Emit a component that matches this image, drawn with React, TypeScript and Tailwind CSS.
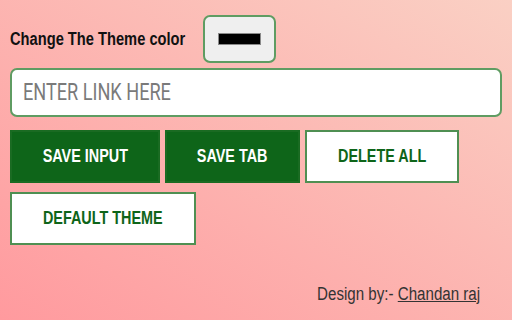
import { useState } from "react";

export default function App() {
  const [link, setLink] = useState("");

  return (
    <div className="flex h-[320px] w-[512px] flex-col bg-[linear-gradient(to_top_right,#ff9a9e,#fad0c4)] px-[10px] pt-[15px] [font-family:'Liberation_Sans',Arial,sans-serif]">
      <div className="flex items-center">
        <span className="w-[193px] whitespace-nowrap text-[18px] font-bold text-[#111]">
          <span className="inline-block origin-left scale-x-[0.815]">Change The Theme color</span>
        </span>
        <button
          type="button"
          className="flex h-[48px] w-[73px] items-center justify-center rounded-[7px] border-2 border-[#5f9c62] bg-[#efefef]"
        >
          <span className="h-[12px] w-[43px] border border-[#8a8a8a] bg-black" />
        </button>
      </div>

      <div className="relative mt-[5px] w-[492px]">
        <input
          className="h-[49px] w-full rounded-[7px] border-2 border-[#5f9c62] bg-white px-[13px] text-[23px] outline-none [font-family:Roboto,sans-serif]"
          value={link}
          onChange={(event) => setLink(event.target.value)}
        />
        {link ? null : (
          <span className="pointer-events-none absolute left-[13px] top-[10px] origin-left scale-x-[0.755] whitespace-nowrap text-[24px] leading-[28px] text-[#7a7a7a] [font-family:Roboto,sans-serif]">
            ENTER LINK HERE
          </span>
        )}
      </div>

      <div className="mt-[13px] flex gap-[5px]">
        <ActionButton className="w-[150px]" filled>
          SAVE INPUT
        </ActionButton>
        <ActionButton className="w-[135px]" filled>
          SAVE TAB
        </ActionButton>
        <ActionButton className="w-[154px]">DELETE ALL</ActionButton>
      </div>
      <div className="mt-[9px] flex">
        <ActionButton className="w-[186px]">DEFAULT THEME</ActionButton>
      </div>

      <div className="mt-auto flex justify-end pb-[12px] pr-[22px] text-[18px] text-[#333]">
        <span className="inline-block origin-right scale-x-[0.84] whitespace-nowrap">
          Design by:-{" "}
          <a className="underline" href="#">
            Chandan raj
          </a>
        </span>
      </div>
    </div>
  );
}

function ActionButton({
  children,
  className,
  filled,
}: {
  children: string;
  className: string;
  filled?: boolean;
}) {
  return (
    <button
      type="button"
      className={
        "h-[53px] whitespace-nowrap border-2 text-[18px] font-bold " +
        (filled
          ? "border-[#1a6b22] bg-[#0e6519] text-white "
          : "border-[#4f8f52] bg-white text-[#0e6519] ") +
        className
      }
    >
      <span className="inline-block scale-x-[0.8]">{children}</span>
    </button>
  );
}
